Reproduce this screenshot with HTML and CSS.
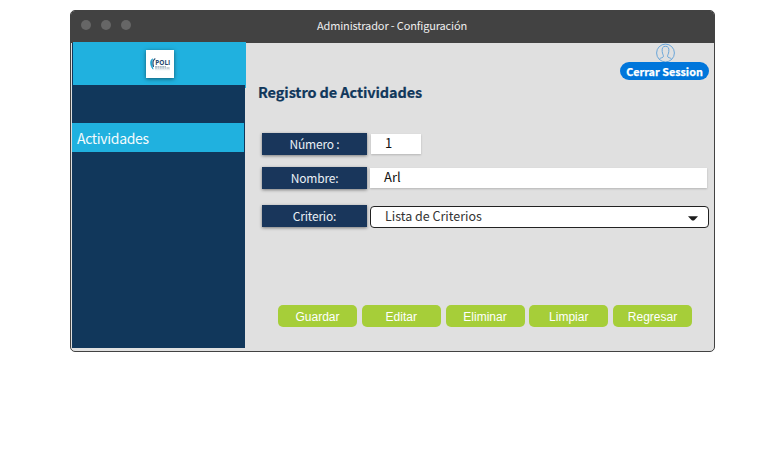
FILE: index.html
```html
<!DOCTYPE html>
<html lang="es">
<head>
<meta charset="utf-8">
<title>Administrador - Configuración</title>
<link rel="stylesheet" href="styles.css">
</head>
<body>
<div class="window">
  <header class="titlebar">
    <div class="dots"><i></i><i></i><i></i></div>
    <span class="title">Administrador - Configuración</span>
  </header>
  <div class="body">
    <aside class="sidebar">
      <div class="brand">
        <div class="logo">
          <svg width="28" height="28" viewBox="0 0 28 28">
            <path d="M6.5 8.8C3.8 10.5 4 15.5 7 19.2C6 15.5 5.700 11.500 6.500 8.800Z" fill="#24a5cf" stroke="#24a5cf" stroke-width=".8"/>
            <path d="M9.300 8.500C6.600 10 6.500 13 7.600 16.800" fill="none" stroke="#24466c" stroke-width="1.100"/>
            <text x="9.200" y="14.900" class="logo-text" textLength="15" lengthAdjust="spacingAndGlyphs">POLI</text>
            <path d="M9 16.700H20M9 18H24" stroke="#668397" stroke-width=".7" stroke-dasharray="2 .4"/>
            <path d="M9 19.700H24" stroke="#c5d2da" stroke-width=".5"/>
          </svg>
        </div>
      </div>
      <nav class="nav"><a class="nav-item">Actividades</a></nav>
    </aside>
    <main class="main">
      <div class="session">
        <svg class="avatar" width="20" height="20" viewBox="0 0 20 20" fill="none" stroke="#5c9fd8" stroke-width=".9">
          <circle cx="9.500" cy="10" r="8.900"/>
          <path transform="translate(-.5 0)" d="M3.800 16.300C4.500 14.700 8 14.800 8 13.300C8 12 6.900 11 6.700 8.500C6.300 5 7.300 3.300 10 3.300S13.700 5 13.300 8.500C13.100 11 12 12 12 13.300C12 14.800 15.500 14.700 16.200 16.300"/>
        </svg>
        <button class="logout">Cerrar Session</button>
      </div>
      <h1 class="heading">Registro de Actividades</h1>
      <form class="form">
        <div class="row"><label class="label">Número :</label><div class="field small">1</div></div>
        <div class="row"><label class="label">Nombre:</label><div class="field wide">Arl</div></div>
        <div class="row last"><label class="label">Criterio:</label><div class="select"><span>Lista de Criterios</span><svg width="10" height="5" viewBox="0 0 10 5"><path d="M0 .3H10L6.500 4Q5 5 3.500 4Z" fill="#1c1c1c"/></svg></div></div>
      </form>
      <div class="actions">
        <button class="action">Guardar</button>
        <button class="action">Editar</button>
        <button class="action">Eliminar</button>
        <button class="action">Limpiar</button>
        <button class="action">Regresar</button>
      </div>
    </main>
  </div>
</div>
</body>
</html>
```
FILE: styles.css
```css
* { box-sizing: border-box; }
body {
  margin: 0;
  background: #fff;
  font-family: "Noto Sans CJK SC", "Noto Sans", sans-serif;
}
button { border: 0; padding: 0; }
.window {
  width: 645px;
  height: 342px;
  margin: 10px 0 0 70px;
  border: 1px solid #424242;
  border-radius: 5px;
  background: #e0e0e0;
  overflow: hidden;
}
.titlebar {
  display: grid;
  grid-template-columns: 120px 1fr 121px;
  align-items: center;
  height: 32px;
  background: #424242;
}
.dots { display: flex; gap: 10px; padding: 0 0 4px 10.4px; }
.dots i { width: 10px; height: 10px; border-radius: 50%; background: #666; }
.title {
  padding-bottom: 4px;
  color: #eee;
  font-size: 11px;
  letter-spacing: -.14px;
  line-height: 16px;
  text-align: center;
}
.body { display: flex; height: 308px; }
.sidebar {
  width: 173px;
  height: 305px;
  margin-left: 1px;
  background: #11375b;
}
.brand {
  display: flex;
  justify-content: center;
  position: relative;
  width: 173px;
  height: 43px;
  margin: -1px 0 0 1px;
  padding-top: 8px;
  background: #20b1df;
}
/* the band's right edge runs slightly past its bottom */
.brand::after {
  content: "";
  position: absolute;
  right: 0;
  bottom: -3px;
  width: 1px;
  height: 3px;
  background: #20b1df;
}
.logo {
  width: 28px;
  height: 28px;
  background: #fff;
  box-shadow: 0 1px 4px rgba(0, 0, 0, .5);
}
.logo svg { display: block; }
.logo-text { font-family: "Open Sans", sans-serif; font-size: 7px; font-weight: 700; fill: #24466c; }
.nav { padding-top: 38px; }
.nav-item {
  display: block;
  width: 172px;
  height: 29px;
  padding-left: 5px;
  background: #20b1df;
  color: #f4fbfd;
  font-size: 14px;
  letter-spacing: -.33px;
  line-height: 31px;
}
.main { width: 469px; padding-left: 13px; }
.session {
  display: flex;
  flex-direction: column;
  align-items: center;
  width: 89px;
  margin-left: 362px;
}
.avatar { margin-left: 2px; }
.logout {
  width: 89px;
  height: 18px;
  margin-top: -1px;
  padding-bottom: 2px;
  border-radius: 9px;
  background: #0076db;
  color: #fff;
  font: 700 10.8px/18px "Noto Sans CJK SC", sans-serif;
  -webkit-text-stroke: .25px #fff;
}
.heading {
  margin: 1px 0 0;
  color: #11375b;
  font-size: 14.5px;
  font-weight: 700;
  letter-spacing: -.1px;
  line-height: 22px;
  -webkit-text-stroke: .2px #11375b;
}
.form { padding: 30px 0 0 4px; }
.row { display: flex; align-items: center; height: 22px; margin-bottom: 12px; }
.row.last { margin: 16px 0 0; }
.label {
  width: 105px;
  height: 22px;
  background: #19365b;
  box-shadow: 0 1px 3px rgba(0, 0, 0, .45);
  color: #eaf0f5;
  font-size: 12px;
  letter-spacing: -.2px;
  line-height: 22px;
  text-align: center;
}
.field {
  height: 20px;
  background: #fff;
  box-shadow: 0 1px 2px rgba(0, 0, 0, .2);
  color: #111;
  font-size: 13px;
  line-height: 18px;
  padding-left: 14px;
}
.small { width: 50px; margin-left: 4px; }
.wide { width: 337px; margin-left: 3px; }
.select {
  display: flex;
  align-items: center;
  justify-content: space-between;
  width: 339px;
  height: 22px;
  margin: 2px 0 0 3px;
  padding: 0 10px 0 14px;
  border: 1px solid #222;
  border-radius: 4px;
  background: #fff;
  color: #333;
  font-size: 12.5px;
  line-height: 20px;
}
.select span { margin-top: -2px; }
.select svg { margin-top: 3px; }
.actions { display: flex; justify-content: space-between; width: 414px; margin: 78px 0 0 20px; }
.action {
  width: 79px;
  height: 22px;
  border-radius: 5px;
  background: #a6ce39;
  color: #fff;
  font: 12px/24px "Liberation Sans", sans-serif;
}
```
